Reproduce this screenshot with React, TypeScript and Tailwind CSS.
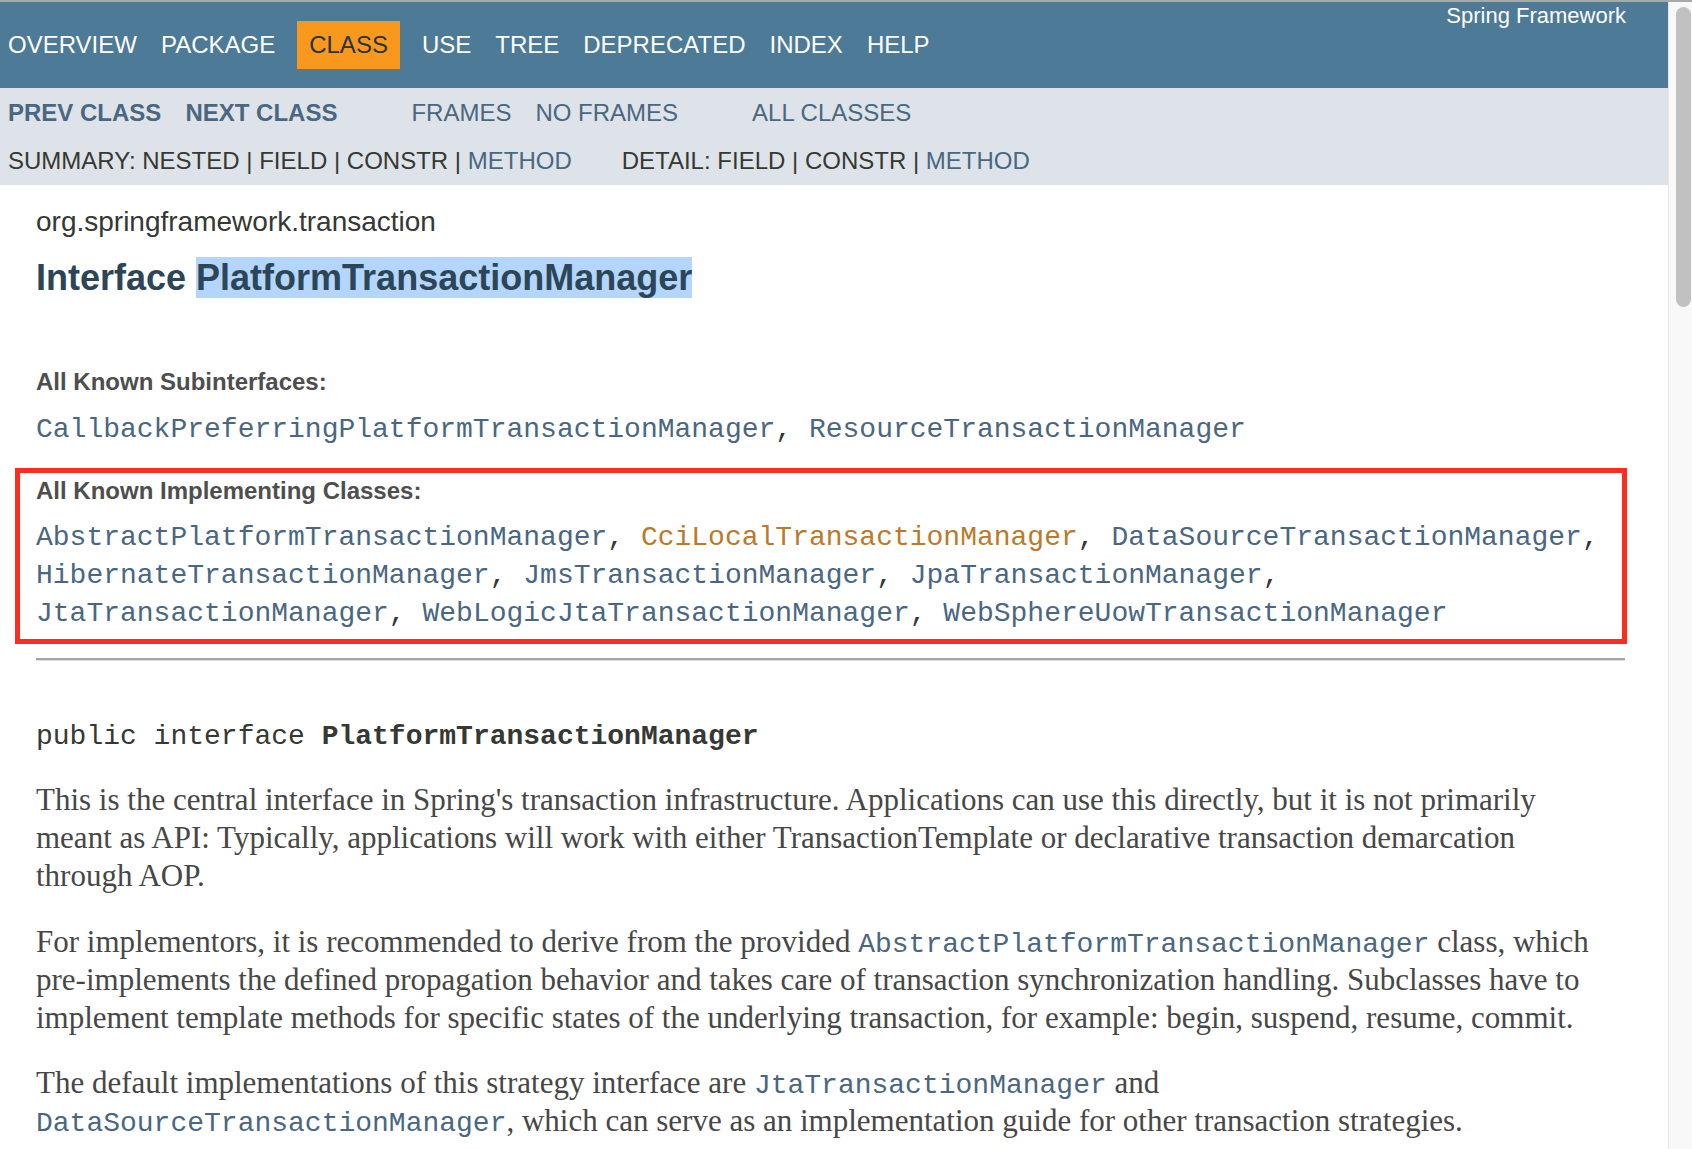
import React from "react";

const Link = ({ children }: { children: React.ReactNode }) => (
  <span className="text-[#4A6782]">{children}</span>
);

const Comma = () => <span className="text-[#353833]">, </span>;

const Code = ({ children }: { children: React.ReactNode }) => (
  <span className="font-['Liberation_Mono','Courier_New',monospace] text-[28px] leading-none text-[#4A6782]">
    {children}
  </span>
);

export default function App() {
  return (
    <div className="w-[1692px] h-[1149px] overflow-hidden bg-white flex flex-col">
      <div className="h-[2px] bg-[#a9a9a9] shrink-0" />
      <div className="flex flex-1 min-h-0">
        <div className="flex-1 min-w-0 flex flex-col font-['Liberation_Sans',Arial,sans-serif] text-[#353833]">
          {/* Top nav */}
          <div className="h-[86px] shrink-0 bg-[#4D7A97] flex justify-between items-start">
            <ul className="flex pt-[19px] text-[24px] leading-[28px] text-white">
              <li className="pl-[8px] pr-[12px] py-[10px]">OVERVIEW</li>
              <li className="px-[12px] py-[10px]">PACKAGE</li>
              <li className="px-[12px] py-[10px] mx-[10px] bg-[#F8981D] text-[#253441]">CLASS</li>
              <li className="px-[12px] py-[10px]">USE</li>
              <li className="px-[12px] py-[10px]">TREE</li>
              <li className="px-[12px] py-[10px]">DEPRECATED</li>
              <li className="px-[12px] py-[10px]">INDEX</li>
              <li className="px-[12px] py-[10px]">HELP</li>
            </ul>
            <span className="mt-[1px] mr-[42px] text-[22px] leading-[25px] text-white">Spring Framework</span>
          </div>

          {/* Sub nav */}
          <div className="h-[97px] shrink-0 bg-[#dee3e9] text-[24px] leading-[28px] pt-[1px]">
            <div className="flex">
              <ul className="flex mr-[50px] font-bold text-[#4A6782]">
                <li className="pl-[8px] pr-[12px] py-[10px]">PREV CLASS</li>
                <li className="px-[12px] py-[10px]">NEXT CLASS</li>
              </ul>
              <ul className="flex mr-[50px] text-[#4A6782]">
                <li className="px-[12px] py-[10px]">FRAMES</li>
                <li className="px-[12px] py-[10px]">NO FRAMES</li>
              </ul>
              <ul className="flex text-[#4A6782]">
                <li className="px-[12px] py-[10px]">ALL CLASSES</li>
              </ul>
            </div>
            <div className="flex pl-[8px] pt-[10px] whitespace-pre">
              <span className="mr-[50px]">
                SUMMARY:{"\u00a0"}NESTED{"\u00a0"}|{"\u00a0"}FIELD{"\u00a0"}|{"\u00a0"}CONSTR{"\u00a0"}|{"\u00a0"}
                <Link>METHOD</Link>
              </span>
              <span>
                DETAIL:{"\u00a0"}FIELD{"\u00a0"}|{"\u00a0"}CONSTR{"\u00a0"}|{"\u00a0"}
                <Link>METHOD</Link>
              </span>
            </div>
          </div>

          {/* Content */}
          <div className="pl-[36px] pr-[43px] flex flex-col">
            <div className="mt-[21px] text-[28px] leading-[32px] text-[#353833]">
              org.springframework.transaction
            </div>
            <h2 className="mt-[19px] text-[36px] leading-[41px] font-bold text-[#2c4557] whitespace-nowrap">
              Interface <span className="bg-[#b4d5fe]">PlatformTransactionManager</span>
            </h2>

            <div className="mt-[67px] text-[24px] leading-[34px] font-bold text-[#4E4E4E]">
              All Known Subinterfaces:
            </div>
            <div className="mt-[12px] text-[28px] leading-[38px] font-['Liberation_Mono','Courier_New',monospace] whitespace-nowrap">
              <Link>CallbackPreferringPlatformTransactionManager</Link>
              <Comma />
              <Link>ResourceTransactionManager</Link>
            </div>

            <div className="mt-[19px] -ml-[21px] w-[1612px] border-[5px] border-[#fe2d1f] pl-[16px] pt-[1px] pb-[6px]">
              <div className="text-[24px] leading-[34px] font-bold text-[#4E4E4E]">
                All Known Implementing Classes:
              </div>
              <div className="mt-[11px] text-[28px] leading-[38px] font-['Liberation_Mono','Courier_New',monospace] whitespace-nowrap">
                <div>
                  <Link>AbstractPlatformTransactionManager</Link>
                  <Comma />
                  <span className="text-[#bb7a2a]">CciLocalTransactionManager</span>
                  <Comma />
                  <Link>DataSourceTransactionManager</Link>
                  <span className="text-[#353833]">,</span>
                </div>
                <div>
                  <Link>HibernateTransactionManager</Link>
                  <Comma />
                  <Link>JmsTransactionManager</Link>
                  <Comma />
                  <Link>JpaTransactionManager</Link>
                  <span className="text-[#353833]">,</span>
                </div>
                <div>
                  <Link>JtaTransactionManager</Link>
                  <Comma />
                  <Link>WebLogicJtaTransactionManager</Link>
                  <Comma />
                  <Link>WebSphereUowTransactionManager</Link>
                </div>
              </div>
            </div>

            <div className="mt-[14px] h-[3px] border-t-2 border-b border-t-[#a4a4a4] border-b-[#dedede]" />

            <div className="mt-[56px] text-[28px] leading-[39px] font-['Liberation_Mono','Courier_New',monospace] text-[#353833] whitespace-pre">
              public interface <b>PlatformTransactionManager</b>
            </div>

            <div className="font-['Liberation_Serif',Georgia,serif] text-[31px] leading-[38px] text-[#474747] whitespace-nowrap">
              <div className="mt-[25px]">
                <div>This is the central interface in Spring's transaction infrastructure. Applications can use this directly, but it is not primarily</div>
                <div>meant as API: Typically, applications will work with either TransactionTemplate or declarative transaction demarcation</div>
                <div>through AOP.</div>
              </div>
              <div className="mt-[28px]">
                <div>
                  For implementors, it is recommended to derive from the provided{" "}
                  <Code>AbstractPlatformTransactionManager</Code> class, which
                </div>
                <div>pre-implements the defined propagation behavior and takes care of transaction synchronization handling. Subclasses have to</div>
                <div>implement template methods for specific states of the underlying transaction, for example: begin, suspend, resume, commit.</div>
              </div>
              <div className="mt-[27px]">
                <div>
                  The default implementations of this strategy interface are <Code>JtaTransactionManager</Code> and
                </div>
                <div>
                  <Code>DataSourceTransactionManager</Code>, which can serve as an implementation guide for other transaction strategies.
                </div>
              </div>
            </div>
          </div>
        </div>

        {/* Scrollbar */}
        <div className="w-[24px] shrink-0 bg-[#f8f8f8] border-l border-[#e6e6e6]">
          <div className="mt-[5px] ml-[7px] w-[15px] h-[300px] rounded-full bg-[#c1c1c1]" />
        </div>
      </div>
    </div>
  );
}
